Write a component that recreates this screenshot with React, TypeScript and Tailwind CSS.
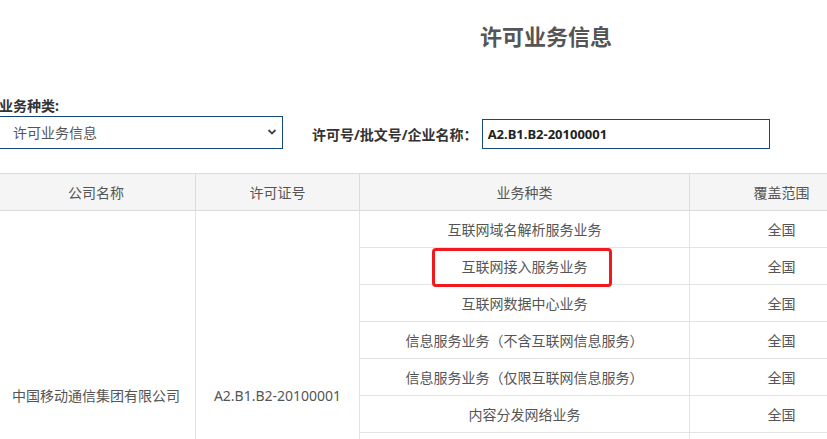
import React from 'react';

const ROWS = [
  '互联网域名解析服务业务',
  '互联网接入服务业务',
  '互联网数据中心业务',
  '信息服务业务（不含互联网信息服务）',
  '信息服务业务（仅限互联网信息服务）',
  '内容分发网络业务',
  '国内多方通信服务业务',
  '国内互联网虚拟专用网业务',
  '互联网资源协作服务业务',
  '在线数据处理与交易处理业务',
];

const font = { fontFamily: '"Noto Sans", "Noto Sans CJK SC", sans-serif' };

export default function App() {
  return (
    <div className="w-[827px] h-[439px] overflow-hidden bg-white" style={font}>
      <div className="ml-[-26px] w-[1144px]">
        {/* page title */}
        <h1 className="pt-[20px] text-center text-[22px] leading-[32px] font-bold text-[#555]">许可业务信息</h1>

        {/* search form */}
        <div className="mt-[44px] flex items-end">
          <div className="flex flex-col">
            <label className="-ml-[3px] text-[14px] leading-[20px] font-bold text-[#333]">许可业务种类:</label>
            <div className="relative ml-[24px] w-[285px] h-[33px]">
              <select
                className="appearance-none w-full h-full border border-[#154a78] bg-white pl-[14px] text-[14px] text-[#555] outline-none"
                defaultValue="许可业务信息"
              >
                <option>许可业务信息</option>
              </select>
              <svg className="absolute right-[6px] top-[12px] pointer-events-none" width="10" height="8" viewBox="0 0 10 8">
                <path d="M1.5 2 L5 5.5 L8.5 2" fill="none" stroke="#444" strokeWidth="1.8" />
              </svg>
            </div>
          </div>
          <div className="ml-[29px] flex items-center h-[30px]">
            <label className="text-[14px] font-bold text-[#333]">许可号/批文号/企业名称：</label>
            <input
              className="ml-[4px] w-[288px] h-[30px] border border-[#154a78] px-[5px] text-[13px] font-bold text-[#222] outline-none"
              defaultValue="A2.B1.B2-20100001"
            />
          </div>
        </div>

        {/* results table */}
        <table className="mt-[24px] ml-[22px] border-collapse text-[14px] text-[#555]">
          <thead>
            <tr className="bg-[#f5f5f5] h-[37px]">
              <th className="w-[199px] border border-[#dcdcdc] font-normal">公司名称</th>
              <th className="w-[164px] border border-[#dcdcdc] font-normal">许可证号</th>
              <th className="w-[330px] border border-[#dcdcdc] font-normal">业务种类</th>
              <th className="w-[184px] border border-[#dcdcdc] font-normal">覆盖范围</th>
            </tr>
          </thead>
          <tbody>
            {ROWS.map((name, i) => (
              <tr key={i} className="h-[37px]">
                {i === 0 && (
                  <>
                    <td rowSpan={ROWS.length} className="border border-[#e3e3e3] text-center">中国移动通信集团有限公司</td>
                    <td rowSpan={ROWS.length} className="border border-[#e3e3e3] text-center">A2.B1.B2-20100001</td>
                  </>
                )}
                <td className="relative border border-[#e3e3e3] text-center">
                  {name}
                  {i === 1 && (
                    <span className="absolute left-[72px] top-0 w-[180px] h-[39px] border-[3px] border-[#f2191c] rounded-[4px]" />
                  )}
                </td>
                <td className="border border-[#e3e3e3] text-center">全国</td>
              </tr>
            ))}
          </tbody>
        </table>
      </div>
    </div>
  );
}
